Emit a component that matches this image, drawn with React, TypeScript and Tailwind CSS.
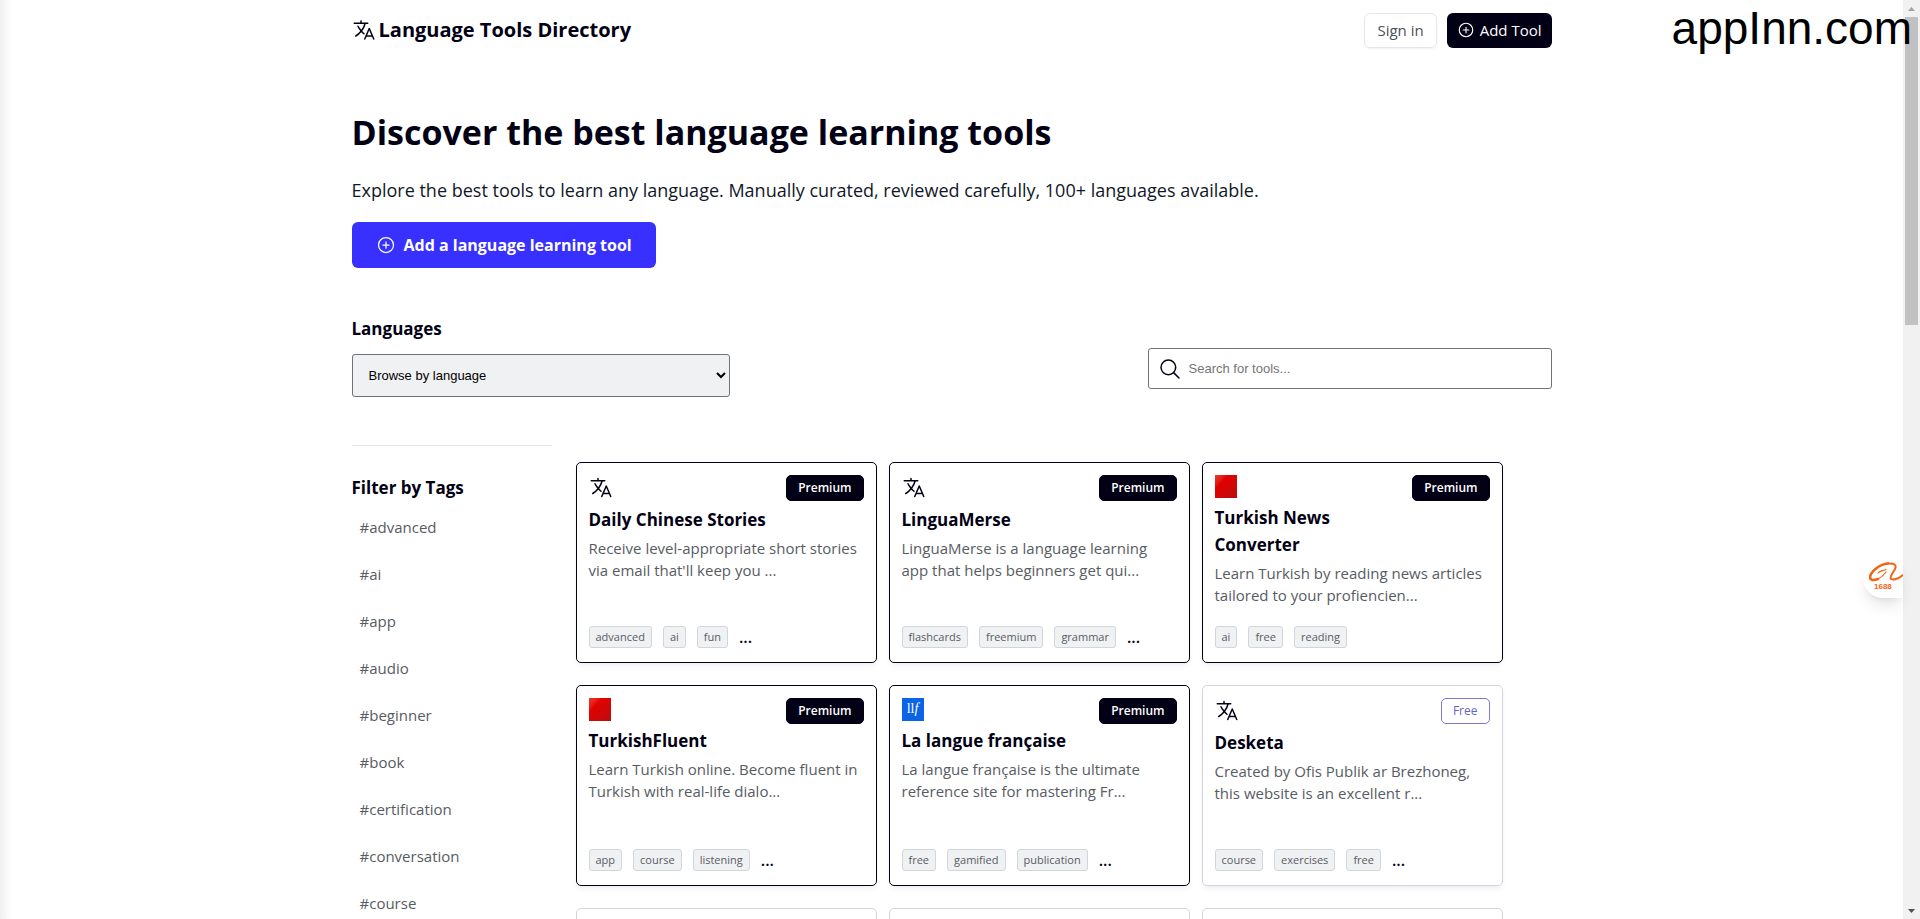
import { IoLanguageOutline, IoAddCircleOutline, IoSearchOutline } from "react-icons/io5";

type Tool = {
    name: string;
    description: string;
    tags: string[];
    more?: boolean;
    plan: "Premium" | "Free";
    logo: "default" | "red" | "llf";
};

const tags = ["advanced", "ai", "app", "audio", "beginner", "book", "certification", "conversation", "course"];

const tools: Tool[] = [
    {
        name: "Daily Chinese Stories",
        description: "Receive level-appropriate short stories via email that'll keep you ...",
        tags: ["advanced", "ai", "fun"],
        more: true,
        plan: "Premium",
        logo: "default",
    },
    {
        name: "LinguaMerse",
        description: "LinguaMerse is a language learning app that helps beginners get qui...",
        tags: ["flashcards", "freemium", "grammar"],
        more: true,
        plan: "Premium",
        logo: "default",
    },
    {
        name: "Turkish News Converter",
        description: "Learn Turkish by reading news articles tailored to your profiencien...",
        tags: ["ai", "free", "reading"],
        plan: "Premium",
        logo: "red",
    },
    {
        name: "TurkishFluent",
        description: "Learn Turkish online. Become fluent in Turkish with real-life dialo...",
        tags: ["app", "course", "listening"],
        more: true,
        plan: "Premium",
        logo: "red",
    },
    {
        name: "La langue française",
        description: "La langue française is the ultimate reference site for mastering Fr...",
        tags: ["free", "gamified", "publication"],
        more: true,
        plan: "Premium",
        logo: "llf",
    },
    {
        name: "Desketa",
        description: "Created by Ofis Publik ar Brezhoneg, this website is an excellent r...",
        tags: ["course", "exercises", "free"],
        more: true,
        plan: "Free",
        logo: "default",
    },
];

function Logo({ kind }: { kind: Tool["logo"] }) {
    if (kind === "red") {
        return <div className="w-[22px] h-[23px] bg-linear-to-br from-[#e8392f] via-[#e30000] via-30% to-[#b80d0d]" />;
    }
    if (kind === "llf") {
        return (
            <div className="w-[22px] h-[23px] bg-[#0b63e5] text-white text-sm leading-[22px] text-center font-['Liberation_Serif',serif]">
                ll<i>f</i>
            </div>
        );
    }
    return <IoLanguageOutline className="w-6 h-[25px] text-[#020014]" />;
}

function ToolCard({ tool }: { tool: Tool }) {
    const premium = tool.plan === "Premium";
    return (
        <article className={`flex flex-col h-[201px] rounded-[5px] border px-3 pt-3 pb-[14px] shadow-md shadow-indigo-950/5 ${premium ? "border-[#020014]" : "border-gray-300"}`}>
            <div className="flex justify-between">
                <div className="w-[190px]">
                    <Logo kind={tool.logo} />
                    <h3 className="mt-[6px] text-[17px] leading-[27px] font-bold">{tool.name}</h3>
                </div>
                <span className={`h-[26px] rounded-[5px] border px-[11px] text-xs leading-6 ${premium ? "bg-[#020014] border-[#020014] text-white font-semibold" : "border-[#8078c8] text-[#6a5fc8]"}`}>
                    {tool.plan}
                </span>
            </div>
            <p className="mt-1 mb-auto text-[15px] leading-[22px] text-[#575c63]">{tool.description}</p>
            <div className="flex items-center gap-[11px]">
                {tool.tags.map((tag) => (
                    <a key={tag} href="#" className="rounded-[3px] border border-gray-300 bg-[#f0f1f3] px-[6px] text-[11px] leading-5 text-[#575c63]">
                        {tag}
                    </a>
                ))}
                {tool.more && <span className="leading-5 font-semibold">...</span>}
            </div>
        </article>
    );
}

export default function App() {
    return (
        <div className="relative flex h-screen overflow-hidden bg-white text-[#020014] font-['Open_Sans',sans-serif]">
            <div className="w-3 -mr-3 shrink-0 bg-linear-to-r from-[#f0f0f0] to-transparent" />
            <div className="flex-1 min-w-0">
                <div className="max-w-[1200px] mx-auto">
                    <header className="flex items-center justify-between h-[60px]">
                        <a href="#" className="flex items-center gap-[3px] text-xl font-bold">
                            <IoLanguageOutline className="size-6" />
                            Language Tools Directory
                        </a>
                        <div className="flex gap-[10px]">
                            <button className="h-[35px] rounded-md border border-gray-200 px-3 text-[15px] text-[#4b5157] shadow-xs">Sign in</button>
                            <button className="flex items-center gap-[5px] h-[35px] rounded-md bg-[#020014] px-[10px] text-[15px] text-white">
                                <IoAddCircleOutline className="size-[18px]" />
                                Add Tool
                            </button>
                        </div>
                    </header>

                    <section className="pt-[46px]">
                        <h1 className="text-[34px] leading-[52px] font-bold">Discover the best language learning tools</h1>
                        <p className="mt-[18px] text-lg leading-7 text-gray-900">
                            Explore the best tools to learn any language. Manually curated, reviewed carefully, 100+ languages available.
                        </p>
                        <button className="flex items-center gap-2 h-[46px] mt-[18px] rounded-md bg-[#3830ff] px-6 text-base font-bold text-white">
                            <IoAddCircleOutline className="size-5" />
                            Add a language learning tool
                        </button>
                    </section>

                    <section className="flex justify-between mt-[47px]">
                        <div>
                            <label htmlFor="language" className="block mb-[11px] text-[17px] leading-7 font-bold">Languages</label>
                            <select id="language" className="w-[378px] h-[43px] rounded-[3px] border border-[#6f7278] bg-[#f0f1f3] px-3 text-[13px] text-black font-['Liberation_Sans',sans-serif]">
                                <option>Browse by language</option>
                            </select>
                        </div>
                        <div className="flex items-center gap-[7px] w-[404px] h-[41px] mt-[33px] rounded-[3px] border border-[#6f7278] px-[9px]">
                            <IoSearchOutline className="size-6 shrink-0" />
                            <input type="search" aria-label="Search for tools" placeholder="Search for tools..." className="flex-1 min-w-0 text-[13px] outline-none placeholder:text-[#757575] font-['Liberation_Sans',sans-serif]" />
                        </div>
                    </section>

                    <div className="flex gap-6 mt-12">
                        <aside className="w-[200px] shrink-0 border-t border-gray-200 pt-7">
                            <h2 className="text-[17px] leading-7 font-bold">Filter by Tags</h2>
                            <ul className="mt-[3px] pl-2">
                                {tags.map((tag) => (
                                    <li key={tag} className="h-[47px] pt-[10px]">
                                        <a href="#" className="block text-[15px] leading-6 text-[#575c63]">#{tag}</a>
                                    </li>
                                ))}
                            </ul>
                        </aside>
                        <main className="grid flex-1 grid-cols-3 gap-x-3 gap-y-[22px] mt-[17px] mr-[49px]">
                            {tools.map((tool) => (
                                <ToolCard key={tool.name} tool={tool} />
                            ))}
                            <div className="h-[201px] rounded-[5px] border border-gray-300" />
                            <div className="h-[201px] rounded-[5px] border border-gray-300" />
                            <div className="h-[201px] rounded-[5px] border border-gray-300" />
                        </main>
                    </div>
                </div>
            </div>

            {/* scrollbar */}
            <div className="flex flex-col items-center w-[17px] shrink-0 bg-[#f1f1f1]">
                <svg viewBox="0 0 17 17" className="size-[17px]" fill="#a3a3a3"><path d="M5 11l3.500-4 3.500 4z" /></svg>
                <div className="w-[13px] h-[308px] bg-[#c1c1c1]" />
                <svg viewBox="0 0 17 17" className="size-[17px] mt-auto" fill="#505050"><path d="M5 7l3.500 4 3.500-4z" /></svg>
            </div>

            <div className="absolute top-0 right-2 text-[46px] leading-[56px] text-black font-['Liberation_Sans',sans-serif]">appInn.com</div>

            <a href="#" aria-label="1688" className="absolute right-[17px] top-[558px] flex flex-col w-10 h-10 rounded-l-full bg-white pt-1 pl-[6px] shadow-lg">
                <svg viewBox="0 0 34 20" className="w-[34px] h-5" fill="none" stroke="#f06414" strokeLinecap="round">
                    <path strokeWidth="2.500" d="M9 17C4 19 1 18 1 15C2 9 11 2 19 1.500" />
                    <path strokeWidth="2" d="M19 1.500C25 1 28 3 26 7C24 11 20 15 22 17C24 18.500 29 17 34 13" />
                    <path strokeWidth="1.200" d="M9 17C13 15 15 13 17 10M9 11C11 8.500 14 9 17 7.500" />
                </svg>
                <span className="pl-[5px] text-[8px] leading-[9px] font-bold text-[#f06414] font-['Liberation_Sans',sans-serif]">1688</span>
            </a>
        </div>
    );
}
